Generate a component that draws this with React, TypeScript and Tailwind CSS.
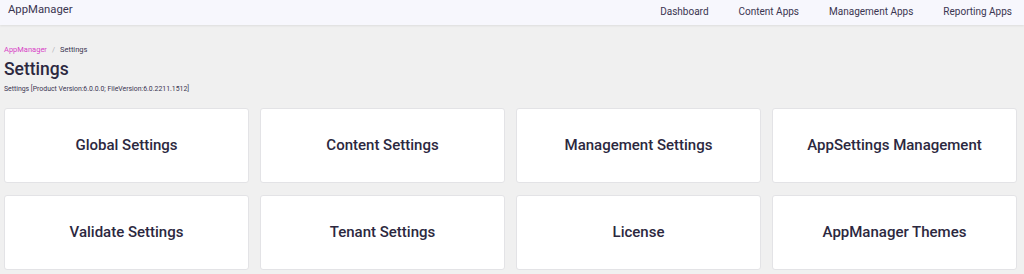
const navLinks = ["Dashboard", "Content Apps", "Management Apps", "Reporting Apps"];

const settings = [
  "Global Settings",
  "Content Settings",
  "Management Settings",
  "AppSettings Management",
  "Validate Settings",
  "Tenant Settings",
  "License",
  "AppManager Themes",
];

const SettingCard = ({ title }: { title: string }) => (
  <div className="flex h-[75px] items-center justify-center rounded-[3px] border border-[#e3e3e6] bg-white text-[15px] font-medium text-[#2c2840]">
    {title}
  </div>
);

export default function App() {
  return (
    <div className="min-h-[274px] bg-[#f0f0f0] font-['Roboto',sans-serif] text-[#2c2840]">
      <nav className="flex h-[25px] items-center justify-between bg-[#f7f7fd] pl-[8px] pr-[12px] shadow-[0_1px_2px_rgba(0,0,0,0.08)]">
        <span className="-mt-[4px] text-[11.3px] text-[#3a3550]">AppManager</span>
        <ul className="-mt-[2px] flex gap-[30px] text-[10px] text-[#3a3550]">
          {navLinks.map((link) => (
            <li key={link}>{link}</li>
          ))}
        </ul>
      </nav>

      <div className="pl-[4px] pr-[7px] pt-[20px]">
        <div className="flex items-center gap-[5px] text-[7.5px] leading-[10px]">
          <span className="text-[#d83fc6]">AppManager</span>
          <span className="text-[#b0b0b8]">/</span>
          <span className="text-[#3a3550]">Settings</span>
        </div>
        <h1 className="mt-[3px] text-[17.5px] font-medium leading-[22px]">Settings</h1>
        <p className="mt-[5px] text-[6.9px] leading-[9px] text-[#3a3550]">
          Settings [Product Version:6.0.0.0; FileVersion:6.0.2211.1512]
        </p>

        <div className="mt-[14px] grid grid-cols-4 gap-x-[11px] gap-y-[12px]">
          {settings.map((s) => (
            <SettingCard key={s} title={s} />
          ))}
        </div>
      </div>
    </div>
  );
}
